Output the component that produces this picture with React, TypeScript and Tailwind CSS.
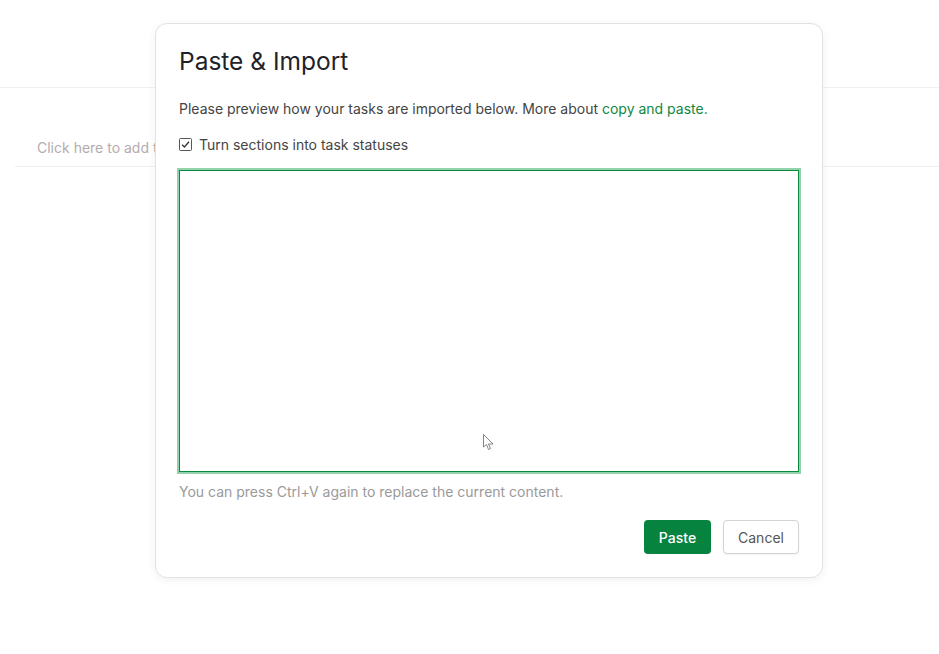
import React from "react";

export default function App() {
  return (
    <div className="relative w-[939px] h-[654px] bg-white overflow-hidden" style={{ fontFamily: "Inter, 'Noto Sans', sans-serif" }}>
      {/* background page */}
      <div className="h-[88px] border-b border-[#f0f0f0]" />
      <div className="ml-[15px] h-[79px] border-b border-[#f0f0f0] flex items-end pb-[8px] pl-[22px]">
        <span className="text-[14px] leading-[20px] text-[#b5abae]">Click here to add tasks</span>
      </div>

      {/* modal */}
      <div className="absolute left-[155px] top-[23px] w-[668px] h-[555px] bg-white rounded-[12px] border border-[#e2e2e2] shadow-[0_2px_10px_rgba(0,0,0,0.06)] px-[23px] pt-[21px] pb-[23px] flex flex-col">
        <h1 className="text-[24.5px] leading-[32px] text-[#1f2329] font-normal">Paste &amp; Import</h1>
        <p className="mt-[22px] text-[14px] leading-[20px] text-[#444]">
          Please preview how your tasks are imported below. More about{" "}
          <span className="text-[#11873f]">copy and paste.</span>
        </p>
        <label className="mt-[15px] h-5 flex items-center gap-[7px] text-[14px] text-[#444]">
          <svg width="13" height="13" viewBox="0 0 13 13" className="shrink-0">
            <rect x="0.5" y="0.5" width="12" height="12" rx="1" fill="white" stroke="#555" />
            <path d="M3 6.6 L5.4 9 L10 3.8" fill="none" stroke="#333" strokeWidth="1.3" />
          </svg>
          <span>Turn sections into task statuses</span>
        </label>
        <div className="mt-4 h-[302px] w-[620px] border border-[#0a8a3e] shadow-[0_0_0_2px_#93d3ab] bg-white" />
        <p className="mt-[10px] text-[14px] leading-[20px] text-[#9a9a9a]">
          You can press Ctrl+V again to replace the current content.
        </p>
        <div className="mt-[18px] flex justify-end gap-3">
          <button className="h-[34px] w-[67px] rounded-[4px] bg-[#06843f] text-white text-[14px] font-medium">Paste</button>
          <button className="h-[34px] w-[76px] rounded-[4px] bg-white border border-[#d3d3d3] text-[#555] text-[14px] shadow-[0_1px_2px_rgba(0,0,0,0.05)]">Cancel</button>
        </div>
      </div>

      {/* mouse cursor */}
      <svg className="absolute left-[483px] top-[434px]" width="12" height="18" viewBox="0 0 12 18">
        <path d="M0.5 0.5 L0.5 13 L3.5 10.5 L5.5 15.5 L7.5 14.5 L5.5 10 L10 10 Z" fill="white" stroke="#666" strokeWidth="0.8" />
      </svg>
    </div>
  );
}
